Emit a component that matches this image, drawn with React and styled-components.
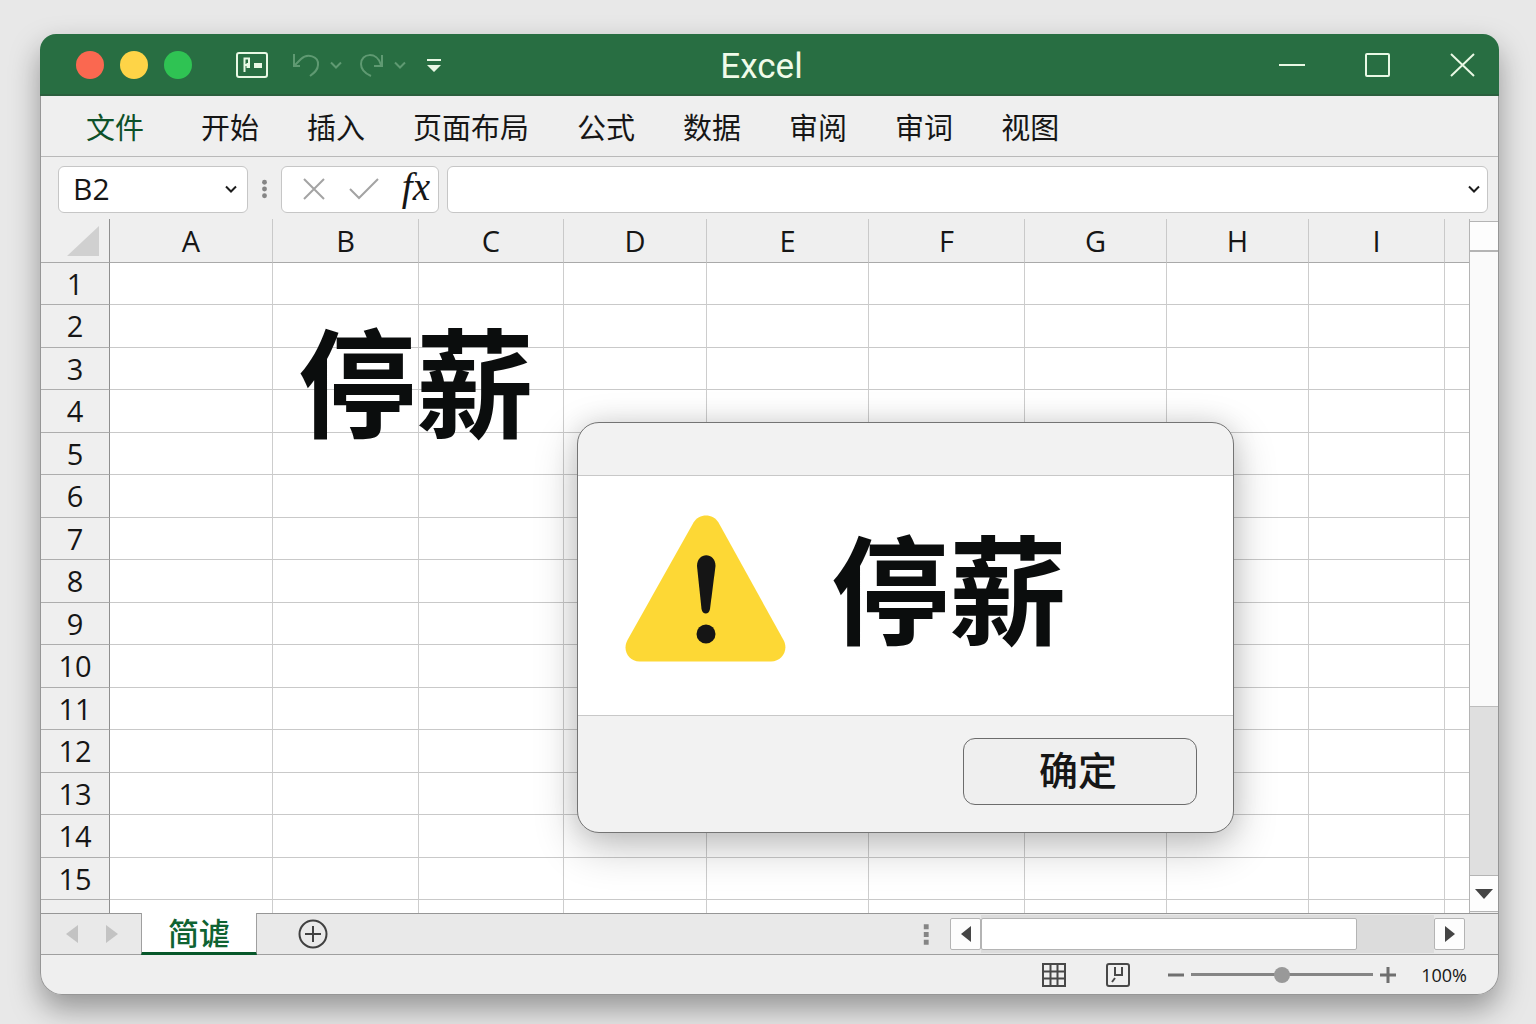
import React, { useState } from 'react';
import styled, { createGlobalStyle, css } from 'styled-components';

const LATIN = '"Open Sans", "Noto Sans CJK SC", sans-serif';
const HAN = '"Noto Sans CJK SC", "Noto Sans", sans-serif';

const GlobalStyle = createGlobalStyle`
  * {
    box-sizing: border-box;
  }

  body {
    margin: 0;
    background: #e8e8e8;
    color: #161616;
    font-family: ${LATIN};
  }

  button,
  input {
    margin: 0;
    padding: 0;
    border: 0;
    background: none;
    color: inherit;
    font: inherit;
  }
`;

const Page = styled.div`
  display: flex;
  min-height: 100vh;
  padding: 34px 37px 29px 40px;
`;

const Window = styled.main`
  flex: 1;
  min-width: 0;
  display: flex;
  flex-direction: column;
  border-radius: 16px 16px 22px 22px;
  box-shadow: 0 14px 30px rgba(0, 0, 0, 0.36);
`;

/* ---------- title bar ---------- */

const TitleBar = styled.header`
  display: grid;
  grid-template-columns: 1fr auto 1fr;
  align-items: center;
  height: 62px;
  padding: 2px 24px 0 36px;
  border-radius: 16px 16px 0 0;
  border-bottom: 2px solid #2b5f3e;
  background: #286e42;
`;

const BarGroup = styled.div`
  display: flex;
  align-items: center;
  justify-content: ${props => props.$end ? 'flex-end' : 'flex-start'};
  gap: ${props => props.$gap || 0}px;
`;

const TrafficLight = styled.button`
  width: 28px;
  height: 28px;
  border-radius: 50%;
  background: ${props => props.$color};
`;

const QuickTools = styled.div`
  display: flex;
  align-items: center;
  margin-left: 28px;
`;

const IconButton = styled.button`
  display: flex;
  align-items: center;
  justify-content: center;
  color: ${props => props.$color || '#e9f8e4'};
  margin-left: ${props => props.$space || 0}px;
`;

const Title = styled.h1`
  margin: 0;
  padding: 4px 28px 0 0;
  color: #f0fbe9;
  font-family: Roboto, "Liberation Sans", sans-serif;
  font-size: 35px;
  font-weight: 400;
  line-height: 40px;
`;

/* ---------- menu and formula bar ---------- */

const Body = styled.div`
  flex: 1;
  display: flex;
  flex-direction: column;
  border: 1px solid #969696;
  border-top: 0;
  border-radius: 0 0 22px 22px;
  background: #efefef;
`;

const Menu = styled.nav`
  display: flex;
  align-items: center;
  gap: 48px;
  height: 61px;
  padding: 0 45px;
  border-bottom: 1px solid #b9b9b9;
`;

const MenuItem = styled.button`
  font-family: ${HAN};
  font-size: 29px;
  line-height: 40px;
  white-space: nowrap;

  ${props => props.$active && css`
    margin-right: 9px;
    color: #0d5129;
  `}
`;

const FormulaBar = styled.div`
  display: flex;
  align-items: center;
  height: 62px;
  padding: 2px 10px 0 17px;
`;

const Box = styled.div`
  display: flex;
  align-items: center;
  height: 47px;
  border: 1px solid #c6c6c6;
  border-radius: 6px;
  background: #fff;
`;

const NameBox = styled(Box)`
  width: 190px;
  padding: 0 10px 0 14px;
`;

const NameInput = styled.input`
  flex: 1;
  min-width: 0;
  font-size: 30px;
  line-height: 40px;
`;

const Dots = styled.svg`
  width: 33px;
  height: 22px;
  fill: #858585;
`;

const FormulaTools = styled(Box)`
  width: 158px;
  padding: 0 8px 0 20px;
  justify-content: space-between;
`;

const FxButton = styled.button`
  padding-bottom: 4px;
  font-family: "Liberation Serif", serif;
  font-size: 39px;
  font-style: italic;
  line-height: 40px;
`;

const FormulaBox = styled(Box)`
  flex: 1;
  margin-left: 8px;
  padding: 0 7px 0 12px;
`;

const FormulaInput = styled.input`
  flex: 1;
  min-width: 0;
  font-size: 28px;
`;

/* ---------- sheet ---------- */

const Workspace = styled.section`
  position: relative;
  flex: 1;
  display: flex;
`;

const SheetArea = styled.div`
  flex: 1;
  min-width: 0;
  background: #fff;
`;

const Sheet = styled.table`
  width: 100%;
  height: 100%;
  table-layout: fixed;
  border-collapse: separate;
  border-spacing: 0;
`;

const SheetRow = styled.tr`
  height: 42px;

  &:nth-child(even) {
    height: 43px;
  }

  &:last-child {
    height: 13px;
  }
`;

const ColumnHead = styled.th`
  height: 44px;
  padding: 0;
  border-right: 1px solid #c9c9c9;
  border-bottom: 1px solid #a9a9a9;
  background: #efefef;
  font-size: 29px;
  font-weight: 400;
  line-height: 40px;

  &:last-child {
    border-right: 0;
  }
`;

const Corner = styled(ColumnHead)`
  border-right-color: #8f8f8f;
  line-height: 0;
  text-align: right;
  padding-right: 9px;
`;

const RowHead = styled.th`
  padding: 0;
  border-right: 1px solid #8f8f8f;
  border-bottom: 1px solid #adadad;
  background: #efefef;
  font-size: 29px;
  font-weight: 400;
  line-height: 40px;

  ${SheetRow}:last-child & {
    border-bottom: 0;
  }
`;

const Cell = styled.td`
  position: relative;
  padding: 0;
  border-right: 1px solid #cdcdcd;
  border-bottom: 1px solid #c9c9c9;

  &:last-child {
    border-right: 0;
  }

  ${SheetRow}:last-child & {
    border-bottom: 0;
  }
`;

const bigText = css`
  color: #0b0d0d;
  font-family: ${HAN};
  font-size: 118px;
  font-weight: 700;
  line-height: 118px;
  white-space: nowrap;
`;

/* spills over the neighbouring cells */
const CellText = styled.span`
  ${bigText}
  position: absolute;
  top: 14px;
  left: 25px;
  z-index: 1;
`;

const VScroll = styled.div`
  display: flex;
  flex-direction: column;
  width: 29px;
  padding: 2px 0 1px;
  border-left: 1px solid #b4b4b4;
`;

const SplitBox = styled.div`
  height: 30px;
  border-top: 1px solid #b4b4b4;
  border-bottom: 1px solid #b4b4b4;
  background: #fdfdfd;
`;

const VTrack = styled.div`
  flex: 1;
  background: #dfdfdf;
`;

const VThumb = styled.div`
  height: 73%;
  border-top: 1px solid #b4b4b4;
  border-bottom: 1px solid #bdbdbd;
  background: #fafafa;
`;

const VButton = styled.button`
  display: flex;
  align-items: center;
  justify-content: center;
  height: 37px;
  border-top: 1px solid #b4b4b4;
  border-bottom: 1px solid #b4b4b4;
  background: #fdfdfd;
  color: #444;
`;

/* ---------- dialog ---------- */

const Dialog = styled.section`
  position: absolute;
  top: 203px;
  left: 536px;
  z-index: 2;
  width: 657px;
  border: 1px solid #747474;
  border-radius: 22px;
  background: #f2f2f2;
  box-shadow: 0 14px 44px rgba(0, 0, 0, 0.24), 0 0 26px rgba(0, 0, 0, 0.1);
`;

const DialogHeader = styled.header`
  height: 52px;
`;

const DialogBody = styled.div`
  display: flex;
  align-items: center;
  gap: 45px;
  height: 241px;
  padding: 0 47px 14px;
  border-top: 1px solid #c8c8c8;
  border-bottom: 1px solid #c8c8c8;
  background: #fff;
`;

const DialogText = styled.p`
  ${bigText}
  margin: 0;
  padding-bottom: 8px;
`;

const DialogFooter = styled.footer`
  display: flex;
  justify-content: flex-end;
  padding: 22px 36px 27px;
`;

const OkButton = styled.button`
  width: 234px;
  height: 67px;
  padding: 0 4px 8px 0;
  border: 1px solid #6c6c6c;
  border-radius: 12px;
  background: #efefef;
  font-family: ${HAN};
  font-size: 39px;
  font-weight: 500;
  line-height: 56px;
`;

/* ---------- bottom bars ---------- */

const SheetBar = styled.div`
  display: flex;
  align-items: stretch;
  height: 42px;
  border-top: 1px solid #969696;
  border-bottom: 1px solid #9f9f9f;
  background: #e9e9e9;
`;

const SheetNav = styled.div`
  display: flex;
  align-items: center;
  gap: 28px;
  width: 100px;
  padding-left: 25px;
`;

const SheetTab = styled.button`
  width: 116px;
  margin: -1px 0;
  padding-bottom: 2px;
  border-right: 1px solid #9f9f9f;
  border-left: 1px solid #9f9f9f;
  border-bottom: 3px solid #07572a;
  background: #fff;
  color: #0f6332;
  font-family: ${HAN};
  font-size: 31px;
  font-weight: 500;
  line-height: 36px;
`;

const HScroll = styled.div`
  display: flex;
  align-items: center;
  width: 548px;
  margin-left: auto;
  margin-right: 33px;
`;

const HButton = styled.button`
  display: flex;
  align-items: center;
  justify-content: center;
  width: 31px;
  height: 32px;
  border: 1px solid #b4b4b4;
  border-radius: 2px;
  background: #fdfdfd;
  color: #444;
`;

const HTrack = styled.div`
  flex: 1;
  height: 38px;
  padding: 3px 0;
  background: #dcdcdc;
`;

const HThumb = styled.div`
  width: 83%;
  height: 32px;
  border: 1px solid #b4b4b4;
  border-radius: 2px;
  background: #fff;
`;

const StatusBar = styled.footer`
  display: flex;
  align-items: center;
  justify-content: flex-end;
  height: 39px;
  padding-right: 31px;
`;

const ZoomSlider = styled.input`
  appearance: none;
  width: 182px;
  height: 18px;
  margin: 0 7px;
  background: linear-gradient(#858585, #858585) center / 100% 3px no-repeat;

  &::-webkit-slider-thumb {
    appearance: none;
    width: 16px;
    height: 16px;
    border-radius: 50%;
    background: #999;
  }
`;

const ZoomValue = styled.output`
  margin-left: 25px;
  font-size: 18px;
  line-height: 24px;
`;

/* ---------- drawings ---------- */

const Stroke = ({ w, h, width = 2, children }) => (
  <svg
    width={w}
    height={h}
    viewBox={`0 0 ${w} ${h}`}
    fill="none"
    stroke="currentColor"
    strokeWidth={width}
    aria-hidden="true"
  >
    {children}
  </svg>
);

const Chevron = () => (
  <Stroke w={12} h={8}><path d="M1 1.500 6 6.500 11 1.500" /></Stroke>
);

const Triangle = ({ w, h, points }) => (
  <svg width={w} height={h} viewBox={`0 0 ${w} ${h}`} fill="currentColor" aria-hidden="true">
    <polygon points={points} />
  </svg>
);

const Warning = () => (
  <svg width="161" height="147" viewBox="0 0 161 147" role="img" aria-label="警告">
    <path
      fill="#fdd835"
      d="M68.500 7.500C74-2 88-2 93.500 7.500L158.500 125C164 135 157 146.500 146 146.500H14.500C3.500 146.500-3 135 2.500 125Z"
    />
    <path fill="#151515" d="M72 51C72 36.500 90.500 36.500 90.500 51L85 94C84 100 77.500 100 76.500 94Z" />
    <circle cx="81" cy="119" r="9.500" fill="#151515" />
  </svg>
);

const menuItems = ['文件', '开始', '插入', '页面布局', '公式', '数据', '审阅', '审词', '视图'];

const columns = [
  { name: 'A', width: 163 },
  { name: 'B', width: 146 },
  { name: 'C', width: 145 },
  { name: 'D', width: 143 },
  { name: 'E', width: 162 },
  { name: 'F', width: 156 },
  { name: 'G', width: 142 },
  { name: 'H', width: 142 },
  { name: 'I', width: 136 },
  { name: '' },
];

const rows = [1, 2, 3, 4, 5, 6, 7, 8, 9, 10, 11, 12, 13, 14, 15, ''];

const cells = { B2: '停薪' };

function App() {
  const [zoom, setZoom] = useState(100);
  const [formula, setFormula] = useState('');

  return (
    <Page>
      <GlobalStyle />
      <Window>
        <TitleBar>
          <BarGroup $gap={16}>
            <TrafficLight $color="#fa6850" aria-label="关闭" />
            <TrafficLight $color="#fed447" aria-label="最小化" />
            <TrafficLight $color="#2fc353" aria-label="缩放" />
            <QuickTools>
              <IconButton aria-label="保存">
                <Stroke w={32} h={26}>
                  <rect x="1" y="1" width="30" height="24" rx="2" />
                  <path d="M8.500 20V6.500H13V13H8.500" />
                  <path d="M10.500 13.500H14M18 13.500h8" strokeWidth="5" />
                </Stroke>
              </IconButton>
              <IconButton $color="#5f9a72" $space={24} aria-label="撤消">
                <Stroke w={30} h={26}>
                  <path d="M2 2V14H8M2 14 9 7C15 1 27 4 26 13C26 18 22 21 18 24" />
                </Stroke>
              </IconButton>
              <IconButton $color="#5f9a72" $space={8} aria-label="撤消选项">
                <Chevron />
              </IconButton>
              <IconButton $color="#5f9a72" $space={17} aria-label="恢复">
                <Stroke w={26} h={26}>
                  <path d="M12 24C5 21 2 17 2 12C2 1 18 -1 22 13M23 3V14H15" />
                </Stroke>
              </IconButton>
              <IconButton $color="#5f9a72" $space={9} aria-label="恢复选项">
                <Chevron />
              </IconButton>
              <IconButton $space={21} aria-label="自定义快速访问工具栏">
                <Triangle w={14} h={13} points="0,0 14,0 14,2 0,2 0,0 0,6 14,6 7,13 0,6" />
              </IconButton>
            </QuickTools>
          </BarGroup>
          <Title>Excel</Title>
          <BarGroup $gap={60} $end>
            <IconButton aria-label="最小化窗口">
              <Stroke w={26} h={24}><path d="M0 12H26" /></Stroke>
            </IconButton>
            <IconButton aria-label="最大化窗口">
              <Stroke w={25} h={24}><rect x="1" y="1" width="23" height="22" rx="1" /></Stroke>
            </IconButton>
            <IconButton aria-label="关闭窗口">
              <Stroke w={25} h={24}><path d="M1 1 24 23M24 1 1 23" /></Stroke>
            </IconButton>
          </BarGroup>
        </TitleBar>

        <Body>
          <Menu>
            {menuItems.map((item, i) => (
              <MenuItem key={item} $active={i === 0}>{item}</MenuItem>
            ))}
          </Menu>

          <FormulaBar>
            <NameBox>
              <NameInput aria-label="名称框" defaultValue="B2" />
              <IconButton $color="#1c1c1c" aria-label="展开名称框"><Chevron /></IconButton>
            </NameBox>
            <Dots viewBox="0 0 34 22" aria-hidden="true">
              <circle cx="17" cy="4" r="2.500" />
              <circle cx="17" cy="11" r="2.500" />
              <circle cx="17" cy="18" r="2.500" />
            </Dots>
            <FormulaTools>
              <IconButton $color="#a3a3a3" aria-label="取消">
                <Stroke w={24} h={22}><path d="M2 1 22 21M22 1 2 21" /></Stroke>
              </IconButton>
              <IconButton $color="#a3a3a3" aria-label="输入">
                <Stroke w={30} h={22}><path d="M1 11 10 20 29 1" /></Stroke>
              </IconButton>
              <FxButton aria-label="插入函数">fx</FxButton>
            </FormulaTools>
            <FormulaBox>
              <FormulaInput
                aria-label="编辑栏"
                value={formula}
                onChange={e => setFormula(e.target.value)}
              />
              <IconButton $color="#1c1c1c" aria-label="展开编辑栏"><Chevron /></IconButton>
            </FormulaBox>
          </FormulaBar>

          <Workspace>
            <SheetArea>
              <Sheet>
                <colgroup>
                  <col width="69" />
                  {columns.map(col => <col key={col.name} width={col.width} />)}
                </colgroup>
                <thead>
                  <tr>
                    <Corner aria-label="全选">
                      <svg width="34" height="32" viewBox="0 0 34 32" aria-hidden="true">
                        <path d="M33 1V31H1Z" fill="#d0d0d0" />
                      </svg>
                    </Corner>
                    {columns.map(col => (
                      <ColumnHead key={col.name} scope="col">{col.name}</ColumnHead>
                    ))}
                  </tr>
                </thead>
                <tbody>
                  {rows.map(row => (
                    <SheetRow key={row}>
                      <RowHead scope="row">{row}</RowHead>
                      {columns.map(col => {
                        const text = cells[col.name + row];
                        return (
                          <Cell key={col.name}>
                            {text && <CellText>{text}</CellText>}
                          </Cell>
                        );
                      })}
                    </SheetRow>
                  ))}
                </tbody>
              </Sheet>
            </SheetArea>

            <VScroll>
              <SplitBox />
              <VTrack><VThumb /></VTrack>
              <VButton aria-label="向下滚动">
                <Triangle w={18} h={10} points="0,0 18,0 9,10" />
              </VButton>
            </VScroll>

            <Dialog role="dialog" aria-labelledby="alert-text">
              <DialogHeader />
              <DialogBody>
                <Warning />
                <DialogText id="alert-text">停薪</DialogText>
              </DialogBody>
              <DialogFooter>
                <OkButton>确定</OkButton>
              </DialogFooter>
            </Dialog>
          </Workspace>

          <SheetBar>
            <SheetNav>
              <IconButton $color="#c3c3c3" aria-label="上一张工作表">
                <Triangle w={12} h={18} points="12,0 12,18 0,9" />
              </IconButton>
              <IconButton $color="#c3c3c3" aria-label="下一张工作表">
                <Triangle w={12} h={18} points="0,0 12,9 0,18" />
              </IconButton>
            </SheetNav>
            <SheetTab>简谑</SheetTab>
            <IconButton $color="#404040" $space={41} aria-label="新建工作表">
              <Stroke w={30} h={30}>
                <circle cx="15" cy="15" r="13.500" />
                <path d="M15 7V23M7 15H23" />
              </Stroke>
            </IconButton>
            <HScroll>
              <Dots viewBox="0 0 34 22" aria-hidden="true">
                <path d="M7 1h5v5H7zM7 9h5v5H7zM7 17h5v5H7z" />
              </Dots>
              <HButton aria-label="向左滚动">
                <Triangle w={10} h={16} points="10,0 10,16 0,8" />
              </HButton>
              <HTrack><HThumb /></HTrack>
              <HButton aria-label="向右滚动">
                <Triangle w={10} h={16} points="0,0 10,8 0,16" />
              </HButton>
            </HScroll>
          </SheetBar>

          <StatusBar>
            <IconButton $color="#484848" aria-label="普通视图">
              <Stroke w={24} h={24}>
                <path d="M1 1H23V23H1ZM8.500 1V23M15.500 1V23M1 8.500H23M1 15.500H23" />
              </Stroke>
            </IconButton>
            <IconButton $color="#484848" $space={40} aria-label="页面布局视图">
              <Stroke w={24} h={24}>
                <rect x="1" y="1" width="22" height="22" rx="2" />
                <path d="M9 4V12H16V4M9 15 6 19" />
              </Stroke>
            </IconButton>
            <IconButton $color="#6f6f6f" $space={38} aria-label="缩小">
              <Stroke w={16} h={16} width={3}><path d="M0 8H16" /></Stroke>
            </IconButton>
            <ZoomSlider
              type="range"
              aria-label="缩放级别"
              min="10"
              max="190"
              value={zoom}
              onChange={e => setZoom(Number(e.target.value))}
            />
            <IconButton $color="#6f6f6f" aria-label="放大">
              <Stroke w={16} h={16} width={3}><path d="M0 8H16M8 0V16" /></Stroke>
            </IconButton>
            <ZoomValue>{zoom}%</ZoomValue>
          </StatusBar>
        </Body>
      </Window>
    </Page>
  );
}

export default App;
